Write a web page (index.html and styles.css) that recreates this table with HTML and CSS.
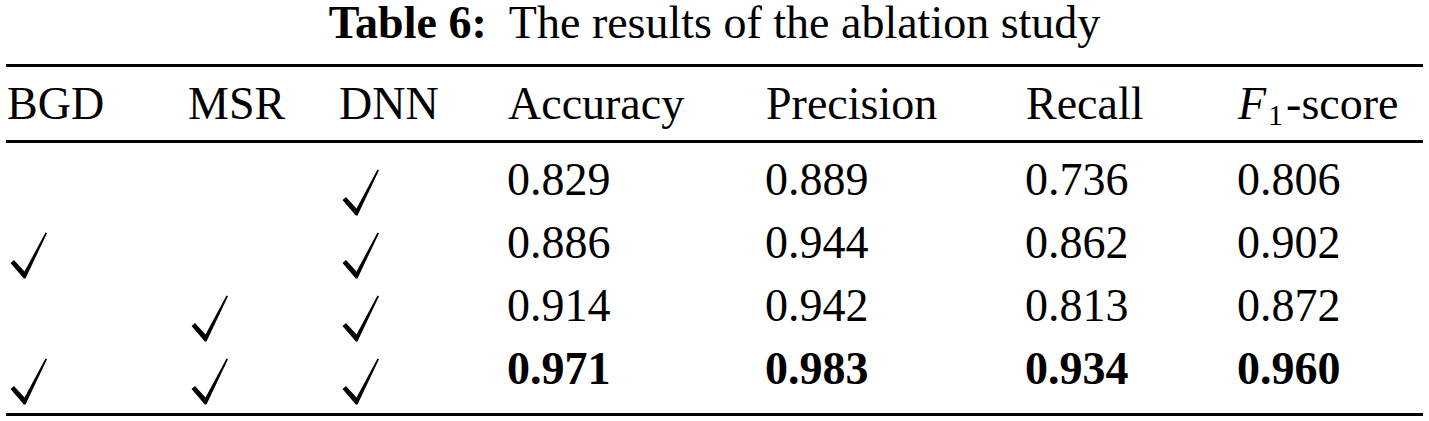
FILE: index.html
```html
<!DOCTYPE html>
<html lang="en">
<head>
    <meta charset="UTF-8">
    <meta name="viewport" content="width=device-width, initial-scale=1.0">
    <title>Table 6</title>
    <link rel="stylesheet" href="styles.css">
</head>
<body>
  <div class="caption"><b>Table 6:</b>&nbsp; The results of the ablation study</div>
  <table class="results">
    <colgroup>
      <col class="c-bgd">
      <col class="c-msr">
      <col class="c-dnn">
      <col class="c-acc">
      <col class="c-pre">
      <col class="c-rec">
      <col class="c-f1">
    </colgroup>
    <thead>
      <tr>
        <th>BGD</th>
        <th>MSR</th>
        <th>DNN</th>
        <th>Accuracy</th>
        <th>Precision</th>
        <th>Recall</th>
        <th><i>F</i><sub>1</sub>-score</th>
      </tr>
    </thead>
    <tbody>
      <tr>
        <td></td>
        <td></td>
        <td><svg class="check" viewBox="0 0 40 47" aria-label="used"><path d="M2.5 31 L6 28 L16.5 39.5 L37.5 0.5 L39 1.2 L17.5 46.5 L15.8 46.5 Z"/></svg></td>
        <td>0.829</td>
        <td>0.889</td>
        <td>0.736</td>
        <td>0.806</td>
      </tr>
      <tr>
        <td><svg class="check" viewBox="0 0 40 47" aria-label="used"><path d="M2.5 31 L6 28 L16.5 39.5 L37.5 0.5 L39 1.2 L17.5 46.5 L15.8 46.5 Z"/></svg></td>
        <td></td>
        <td><svg class="check" viewBox="0 0 40 47" aria-label="used"><path d="M2.5 31 L6 28 L16.5 39.5 L37.5 0.5 L39 1.2 L17.5 46.5 L15.8 46.5 Z"/></svg></td>
        <td>0.886</td>
        <td>0.944</td>
        <td>0.862</td>
        <td>0.902</td>
      </tr>
      <tr>
        <td></td>
        <td><svg class="check" viewBox="0 0 40 47" aria-label="used"><path d="M2.5 31 L6 28 L16.5 39.5 L37.5 0.5 L39 1.2 L17.5 46.5 L15.8 46.5 Z"/></svg></td>
        <td><svg class="check" viewBox="0 0 40 47" aria-label="used"><path d="M2.5 31 L6 28 L16.5 39.5 L37.5 0.5 L39 1.2 L17.5 46.5 L15.8 46.5 Z"/></svg></td>
        <td>0.914</td>
        <td>0.942</td>
        <td>0.813</td>
        <td>0.872</td>
      </tr>
      <tr class="best">
        <td><svg class="check" viewBox="0 0 40 47" aria-label="used"><path d="M2.5 31 L6 28 L16.5 39.5 L37.5 0.5 L39 1.2 L17.5 46.5 L15.8 46.5 Z"/></svg></td>
        <td><svg class="check" viewBox="0 0 40 47" aria-label="used"><path d="M2.5 31 L6 28 L16.5 39.5 L37.5 0.5 L39 1.2 L17.5 46.5 L15.8 46.5 Z"/></svg></td>
        <td><svg class="check" viewBox="0 0 40 47" aria-label="used"><path d="M2.5 31 L6 28 L16.5 39.5 L37.5 0.5 L39 1.2 L17.5 46.5 L15.8 46.5 Z"/></svg></td>
        <td>0.971</td>
        <td>0.983</td>
        <td>0.934</td>
        <td>0.960</td>
      </tr>
    </tbody>
  </table>
</body>
</html>
```

FILE: styles.css
```css
body {
  background-color: #fff;
  color: #000;
  font-family: "Liberation Serif", "Times New Roman", serif;
  margin: 0;
}

.caption {
  font-size: 46px;
  line-height: 46px;
  text-align: center;
}

.results {
  border-collapse: separate;
  border-spacing: 0;
  font-size: 46px;
  line-height: 46px;
  margin: 18px 6px 0;
  table-layout: fixed;
  width: 1417px;
}

.c-bgd { width: 181px; }
.c-msr { width: 151px; }
.c-dnn { width: 169px; }
.c-acc { width: 258px; }
.c-pre { width: 260px; }
.c-rec { width: 212px; }
.c-f1 { width: 186px; }

.results th {
  border-bottom: 3px solid #000;
  border-top: 3px solid #000;
  font-weight: normal;
  padding: 14px 0 13px 1px;
  text-align: left;
  white-space: nowrap;
}

.results th sub {
  font-size: 30px;
  line-height: 0;
  margin: 0 3px 0 2px;
  vertical-align: -6px;
}

.results td {
  padding: 14px 0 3px 0;
  white-space: nowrap;
}

.results tr.best td {
  border-bottom: 3px solid #000;
  font-weight: bold;
  padding-bottom: 21px;
}

/* tick sits below the baseline, like the \surd in the paper */
.check {
  display: inline-block;
  fill: #000;
  height: 47px;
  margin: 0 0 -21px 2px;
  vertical-align: baseline;
  width: 40px;
}
```
